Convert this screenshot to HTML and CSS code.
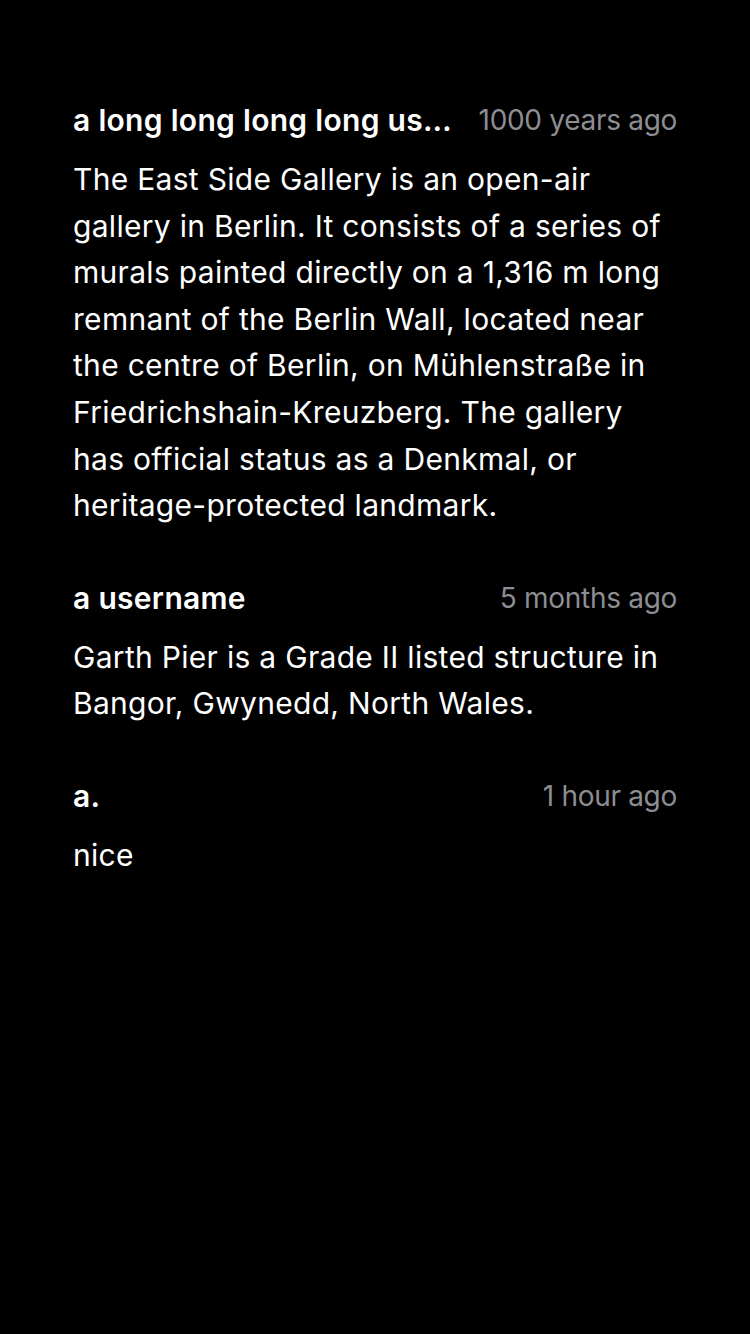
FILE: index.html
```html
<!DOCTYPE html>
<html>
<head>
<meta charset="utf-8">
<link rel="stylesheet" href="styles.css">
</head>
<body>
<main class="comments">
  <article class="comment">
    <header class="comment-head">
      <span class="user">a long long long long username that keeps going</span>
      <span class="time">1000 years ago</span>
    </header>
    <p class="body">The East Side Gallery is an open-air gallery in Berlin. It consists of a series of murals painted directly on a 1,316 m long remnant of the Berlin Wall, located near the centre of Berlin, on Mühlenstraße in Friedrichshain-Kreuzberg. The gallery has official status as a Denkmal, or heritage-protected landmark.</p>
  </article>
  <article class="comment">
    <header class="comment-head">
      <span class="user">a username</span>
      <span class="time">5 months ago</span>
    </header>
    <p class="body">Garth Pier is a Grade II listed structure in Bangor, Gwynedd, North Wales.</p>
  </article>
  <article class="comment">
    <header class="comment-head">
      <span class="user">a.</span>
      <span class="time">1 hour ago</span>
    </header>
    <p class="body">nice</p>
  </article>
</main>
</body>
</html>
```
FILE: styles.css
```css
html, body {
  margin: 0;
  padding: 0;
  background: #000;
}
body {
  width: 750px;
  height: 1334px;
  font-family: Inter, "Noto Sans", "Liberation Sans", sans-serif;
  color: #fff;
}
.comments {
  display: flex;
  flex-direction: column;
  gap: 49px;
  padding: 100px 73px 0 73px;
}
.comment {
  display: flex;
  flex-direction: column;
  gap: 16px;
}
.comment-head {
  display: flex;
  align-items: center;
  gap: 25px;
  height: 40px;
}
.user {
  flex: 1 1 auto;
  min-width: 0;
  font-size: 30px;
  font-weight: 600;
  letter-spacing: 0.3px;
  white-space: nowrap;
  overflow: hidden;
  text-overflow: ellipsis;
}
.time {
  flex: 0 0 auto;
  font-size: 28px;
  color: #8d8d92;
  letter-spacing: -0.3px;
}
.body {
  margin: 0;
  font-size: 30px;
  line-height: 46.6px;
  letter-spacing: 0.3px;
}
```
